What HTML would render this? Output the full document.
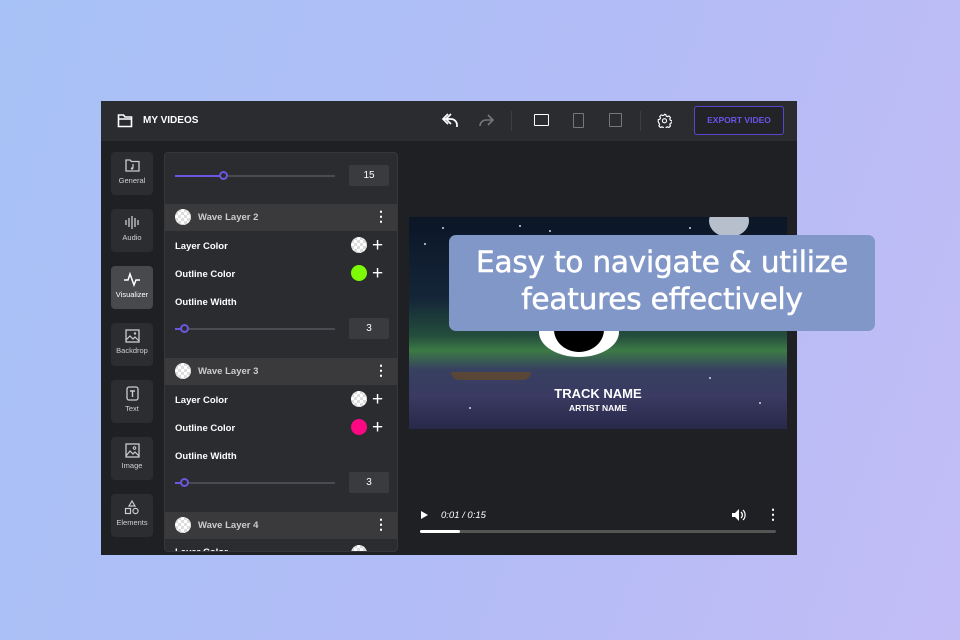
<!DOCTYPE html><html><head><meta charset="utf-8"><style>
*{margin:0;padding:0;box-sizing:border-box}
body{width:960px;height:640px;overflow:hidden;position:relative;font-family:"Liberation Sans",sans-serif;background:linear-gradient(110deg,#a7c2f6 0%,#b3bcf6 55%,#c3bdf6 100%)}
.a{position:absolute}
.win{left:101px;top:101px;width:696px;height:454px;background:#1f2024}
.hdr{left:0;top:0;width:696px;height:40px;background:#2b2c30}
.sb{left:10px;width:42px;height:43px;background:#2c2d31;border-radius:4px;color:#cfd0d4;font-size:7.5px;text-align:center}
.sb svg{display:block;margin:6px auto 3px}
.panel{left:63px;top:51px;width:234px;height:400px;background:#2b2c30;border-radius:4px;overflow:hidden;border:1px solid #36373b}
.lbl{color:#fff;font-weight:bold;font-size:9.5px;left:10px}
.wl{left:0;width:234px;height:27px;background:#3a3a3c}
.chk{width:16px;height:16px;border-radius:50%;background:repeating-conic-gradient(#ddd 0 25%,#fff 0 50%) 0 0/6px 6px}
.plus{color:#fff;font-size:19px;line-height:14px;font-weight:300}
.track{left:10px;width:160px;height:2px;background:#4a4b50}
.knob{width:9px;height:9px;border:2px solid #6b57e0;border-radius:50%;background:#2b2c30}
.num{width:40px;height:21px;background:#3a3b3f;color:#fff;font-size:10px;text-align:center;line-height:21px;border-radius:2px}
.dots{color:#fff;font-size:14px;font-weight:bold}
.st{width:2px;height:2px;border-radius:50%;background:#cfd8e8}
</style></head><body>
<div class="a win">
 <div class="a hdr">
  <svg class="a" style="left:16px;top:12px" width="16" height="15" viewBox="0 0 16 15"><path d="M1.5 2h5l1.5 2h6.5v9.5h-13z M1.5 6h13" fill="none" stroke="#fff" stroke-width="1.6"/></svg>
  <div class="a" style="left:42px;top:14px;color:#fff;font-weight:bold;font-size:10px">MY VIDEOS</div>
  <svg class="a" style="left:340px;top:11px" width="18" height="17" viewBox="0 0 18 17"><path d="M7 2L2 7l5 5M2 7h8a6 6 0 0 1 6 6v2M10 2L5 7l5 5" fill="none" stroke="#fff" stroke-width="1.7"/></svg>
  <svg class="a" style="left:377px;top:12px" width="17" height="15" viewBox="0 0 17 15"><path d="M10 2l5 5-5 5M15 7H8a6 6 0 0 0-6 6" fill="none" stroke="#777" stroke-width="1.6"/></svg>
  <div class="a" style="left:410px;top:10px;width:1px;height:20px;background:#3d3e42"></div>
  <div class="a" style="left:433px;top:13px;width:15px;height:12px;border:1.8px solid #fff;border-radius:1px"></div>
  <div class="a" style="left:472px;top:12px;width:11px;height:15px;border:1.5px solid #777;border-radius:1px"></div>
  <div class="a" style="left:508px;top:12px;width:13px;height:14px;border:1.5px solid #777;border-radius:1px"></div>
  <div class="a" style="left:539px;top:10px;width:1px;height:20px;background:#3d3e42"></div>
  <svg class="a" style="left:556px;top:12px" width="15" height="15" viewBox="0 0 24 24"><path d="M12 2l2 .3.6 2.6 2 1 2.4-1.2 2.6 2.6-1.2 2.4 1 2 2.6.6v3.4l-2.6.6-1 2 1.2 2.4-2.6 2.6-2.4-1.2-2 1-.6 2.6h-3.4l-.6-2.6-2-1-2.4 1.2-2.6-2.6 1.2-2.4-1-2L2 14v-3.4l2.6-.6 1-2L4.4 5.6 7 3l2.4 1.2 2-1z" fill="none" stroke="#fff" stroke-width="1.8"/><circle cx="12" cy="12.3" r="3.3" fill="none" stroke="#fff" stroke-width="1.8"/></svg>
  <div class="a" style="left:593px;top:5px;width:90px;height:29px;border:1.5px solid #5a45d0;border-radius:3px;background:#222327;color:#6a55e8;font-weight:bold;font-size:8.5px;text-align:center;line-height:26px">EXPORT VIDEO</div>
 </div>
 <div class="a sb" style="top:51px"><svg width="15" height="15" viewBox="0 0 15 15"><path d="M1 2h4l1.5 1.5H14V13H1z" fill="none" stroke="#ccc" stroke-width="1.3"/><path d="M8 6v4.5" stroke="#ccc" stroke-width="1.2"/><circle cx="7" cy="10.5" r="1.2" fill="#ccc"/></svg>General</div>
 <div class="a sb" style="top:108px"><svg width="17" height="15" viewBox="0 0 17 15"><path d="M2 5v5M5 3v9M8 1v13M11 3v9M14 5v5" stroke="#ccc" stroke-width="1.3"/></svg>Audio</div>
 <div class="a sb" style="top:165px;background:#48494d;color:#fff"><svg width="18" height="15" viewBox="0 0 18 15"><path d="M1 8h4l2-6 4 11 2-5h4" fill="none" stroke="#fff" stroke-width="1.5"/></svg>Visualizer</div>
 <div class="a sb" style="top:222px"><svg width="15" height="14" viewBox="0 0 15 14"><rect x="1" y="1" width="13" height="12" fill="none" stroke="#ccc" stroke-width="1.3"/><path d="M1 11l4-4 3 3 2-2 4 4" fill="none" stroke="#ccc" stroke-width="1.2"/><circle cx="10" cy="4.5" r="1.2" fill="#ccc"/></svg>Backdrop</div>
 <div class="a sb" style="top:279px"><svg width="13" height="15" viewBox="0 0 13 15"><rect x="1" y="1" width="11" height="13" rx="2" fill="none" stroke="#ccc" stroke-width="1.3"/><path d="M4 5h5M6.5 5v6" stroke="#ccc" stroke-width="1.4"/></svg>Text</div>
 <div class="a sb" style="top:336px"><svg width="15" height="15" viewBox="0 0 15 15"><rect x="1" y="1" width="13" height="13" fill="none" stroke="#ccc" stroke-width="1.3"/><path d="M1 13l4-5 3 3 2-2 4 4" fill="none" stroke="#ccc" stroke-width="1.2"/><circle cx="9.5" cy="5" r="1.3" fill="none" stroke="#ccc"/></svg>Image</div>
 <div class="a sb" style="top:393px"><svg width="16" height="15" viewBox="0 0 16 15"><path d="M8 1l3 5H5z" fill="none" stroke="#ccc" stroke-width="1.2"/><rect x="1.5" y="8.5" width="5" height="5" fill="none" stroke="#ccc" stroke-width="1.2"/><circle cx="11.5" cy="11" r="2.6" fill="none" stroke="#ccc" stroke-width="1.2"/></svg>Elements</div>

 <div class="a panel">
  <div class="a" style="left:10px;top:22px;width:160px;height:2px;background:#4a4b50"></div>
  <div class="a" style="left:10px;top:22px;width:50px;height:2px;background:#6b57e0"></div>
  <div class="a knob" style="left:54px;top:18px"></div>
  <div class="a num" style="left:184px;top:12px">15</div>

  <div class="a wl" style="top:51px"></div>
  <div class="a chk" style="left:10px;top:56px"></div>
  <div class="a" style="left:33px;top:59px;color:#ccc;font-weight:bold;font-size:9.5px">Wave Layer 2</div>
  <div class="a dots" style="left:209px;top:55px">⋮</div>
  <div class="a lbl" style="top:88px">Layer Color</div>
  <div class="a chk" style="left:186px;top:84px"></div>
  <div class="a plus" style="left:207px;top:86px">+</div>
  <div class="a lbl" style="top:116px">Outline Color</div>
  <div class="a" style="left:186px;top:112px;width:16px;height:16px;border-radius:50%;background:#7dfa05"></div>
  <div class="a plus" style="left:207px;top:114px">+</div>
  <div class="a lbl" style="top:144px">Outline Width</div>
  <div class="a track" style="top:175px"></div>
  <div class="a" style="left:10px;top:175px;width:8px;height:2px;background:#6b57e0"></div>
  <div class="a knob" style="left:15px;top:171px"></div>
  <div class="a num" style="left:184px;top:165px">3</div>

  <div class="a wl" style="top:205px"></div>
  <div class="a chk" style="left:10px;top:210px"></div>
  <div class="a" style="left:33px;top:213px;color:#ccc;font-weight:bold;font-size:9.5px">Wave Layer 3</div>
  <div class="a dots" style="left:209px;top:209px">⋮</div>
  <div class="a lbl" style="top:242px">Layer Color</div>
  <div class="a chk" style="left:186px;top:238px"></div>
  <div class="a plus" style="left:207px;top:240px">+</div>
  <div class="a lbl" style="top:270px">Outline Color</div>
  <div class="a" style="left:186px;top:266px;width:16px;height:16px;border-radius:50%;background:#fd0883"></div>
  <div class="a plus" style="left:207px;top:268px">+</div>
  <div class="a lbl" style="top:298px">Outline Width</div>
  <div class="a track" style="top:329px"></div>
  <div class="a" style="left:10px;top:329px;width:8px;height:2px;background:#6b57e0"></div>
  <div class="a knob" style="left:15px;top:325px"></div>
  <div class="a num" style="left:184px;top:319px">3</div>

  <div class="a wl" style="top:359px"></div>
  <div class="a chk" style="left:10px;top:364px"></div>
  <div class="a" style="left:33px;top:367px;color:#ccc;font-weight:bold;font-size:9.5px">Wave Layer 4</div>
  <div class="a dots" style="left:209px;top:363px">⋮</div>
  <div class="a lbl" style="top:394px">Layer Color</div>
  <div class="a chk" style="left:186px;top:392px"></div>
 </div>

 <div class="a" style="left:308px;top:116px;width:378px;height:212px;overflow:hidden;background:linear-gradient(180deg,#0b1626 0%,#142538 38%,#244d3c 56%,#3c7a45 63%,#374060 72%,#3a3a62 85%,#28284a 100%)">
  <div class="a" style="left:300px;top:-12px;width:40px;height:32px;border-radius:50%;background:#b8bfcc"></div>
  <div class="a st" style="left:33px;top:10px"></div><div class="a st" style="left:110px;top:8px"></div><div class="a st" style="left:140px;top:13px"></div><div class="a st" style="left:15px;top:26px"></div><div class="a st" style="left:280px;top:10px"></div><div class="a st" style="left:340px;top:90px"></div><div class="a st" style="left:300px;top:160px"></div><div class="a st" style="left:350px;top:185px"></div><div class="a st" style="left:60px;top:190px"></div>
  <div class="a" style="left:130px;top:90px;width:80px;height:50px;border-radius:50%;background:#fff"></div>
  <div class="a" style="left:145px;top:90px;width:50px;height:45px;border-radius:50%;background:#000"></div>
  <div class="a" style="left:42px;top:155px;width:80px;height:8px;background:#5a4637;border-radius:0 0 30px 30px"></div>
  <div class="a" style="left:0;top:169px;width:378px;text-align:center;color:#fff;font-weight:bold;font-size:13px">TRACK NAME</div>
  <div class="a" style="left:0;top:186px;width:378px;text-align:center;color:#fff;font-weight:bold;font-size:8.5px">ARTIST NAME</div>
 </div>

 <div class="a" style="left:320px;top:410px;width:0;height:0;border-left:7px solid #fff;border-top:4px solid transparent;border-bottom:4px solid transparent"></div>
 <div class="a" style="left:340px;top:409px;color:#fff;font-style:italic;font-size:9.5px">0:01 / 0:15</div>
 <svg class="a" style="left:630px;top:407px" width="16" height="14" viewBox="0 0 16 14"><path d="M1 5h3l4-4v12l-4-4H1z" fill="#fff"/><path d="M10 4a4 4 0 0 1 0 6M12 2a7 7 0 0 1 0 10" fill="none" stroke="#fff" stroke-width="1.2"/></svg>
 <div class="a dots" style="left:665px;top:405px">⋮</div>
 <div class="a" style="left:319px;top:429px;width:356px;height:3px;background:#555;border-radius:2px"></div>
 <div class="a" style="left:319px;top:429px;width:40px;height:3px;background:#fff;border-radius:2px"></div>
</div>

<div class="a" style="left:449px;top:235px;width:426px;height:96px;background:#8197c7;border-radius:7px;color:#fff;font-family:'DejaVu Sans','Liberation Sans',sans-serif;font-size:29.5px;text-align:center;line-height:37px;padding-top:9px;letter-spacing:-0.2px;-webkit-text-stroke:0.5px #fff">Easy to navigate &amp; utilize<br>features effectively</div>
</body></html>
